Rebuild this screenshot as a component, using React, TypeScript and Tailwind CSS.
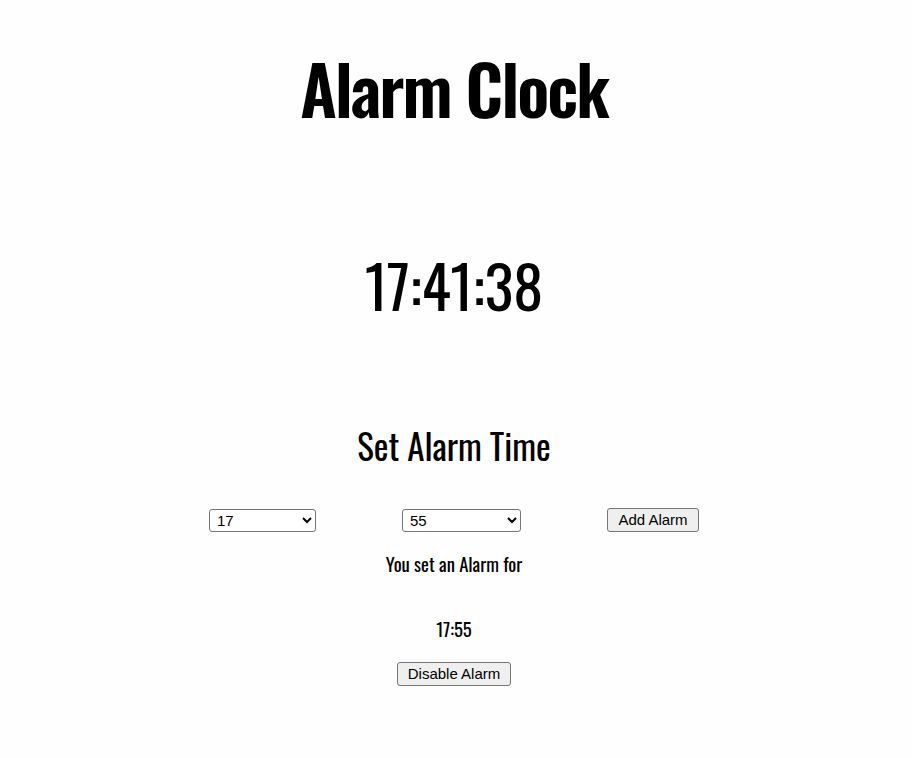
import React, { useState } from 'react';

const pad = (n: number) => String(n).padStart(2, '0');
const hours = Array.from({ length: 24 }, (_, i) => pad(i));
const minutes = Array.from({ length: 60 }, (_, i) => pad(i));

export default function App() {
  const [hour, setHour] = useState('17');
  const [minute, setMinute] = useState('55');
  const [alarm, setAlarm] = useState<string | null>('17:55');

  const selectCls =
    "h-[23px] border border-[#767676] rounded-[3px] bg-white pl-[3px] text-[15px] text-black font-['Liberation_Sans',Arial,sans-serif]";
  const buttonCls =
    "h-[24px] border border-[#767676] rounded-[3px] bg-[#efefef] text-[15px] text-black font-['Liberation_Sans',Arial,sans-serif]";

  return (
    <div className="min-h-screen bg-[#fefefe] pr-[4px] font-['Oswald',sans-serif] text-black flex flex-col items-center">
      <h1 className="pt-[54px] text-[68px] font-semibold tracking-[-2px] leading-none">Alarm Clock</h1>

      <div className="mt-[132px] text-[60px] leading-none">17:41:38</div>

      <h2 className="mt-[114px] text-[35px] leading-none">Set Alarm Time</h2>

      <div className="mt-[45px] w-[576px] flex justify-around items-center">
        <select value={hour} onChange={(e) => setHour(e.target.value)} className={`${selectCls} w-[107px]`}>
          {hours.map((h) => (
            <option key={h} value={h}>{h}</option>
          ))}
        </select>
        <select value={minute} onChange={(e) => setMinute(e.target.value)} className={`${selectCls} w-[119px]`}>
          {minutes.map((m) => (
            <option key={m} value={m}>{m}</option>
          ))}
        </select>
        <button onClick={() => setAlarm(`${hour}:${minute}`)} className={`${buttonCls} w-[92px]`}>
          Add Alarm
        </button>
      </div>

      {alarm && (
        <div className="flex flex-col items-center">
          <p className="mt-[23px] text-[18.7px] leading-none">You set an Alarm for</p>
          <p className="mt-[46px] text-[18.7px] leading-none">{alarm}</p>
          <button onClick={() => setAlarm(null)} className={`${buttonCls} mt-[24px] w-[114px]`}>
            Disable Alarm
          </button>
        </div>
      )}
    </div>
  );
}
